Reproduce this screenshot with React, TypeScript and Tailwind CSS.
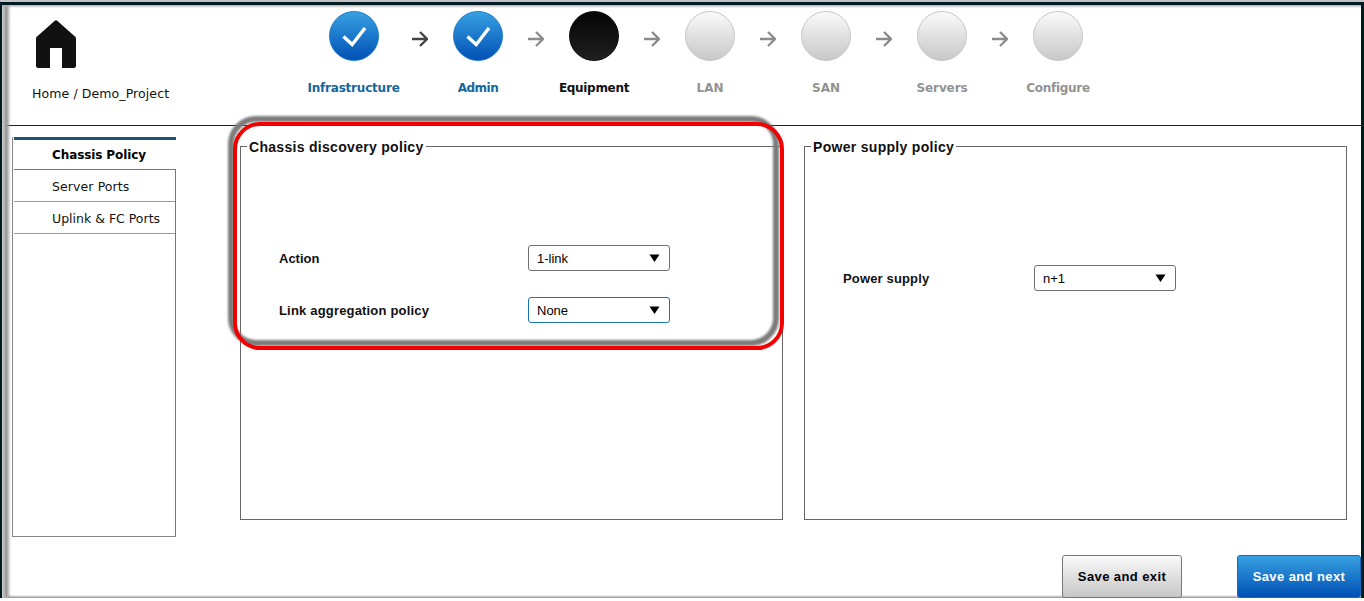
import type { ReactNode } from "react";

type StepState = "done" | "current" | "todo";

const steps: { name: string; state: StepState; tracking: string }[] = [
  { name: "Infrastructure", state: "done", tracking: "tracking-[-0.2px] -ml-px" },
  { name: "Admin", state: "done", tracking: "tracking-[-0.5px]" },
  { name: "Equipment", state: "current", tracking: "tracking-[-0.3px]" },
  { name: "LAN", state: "todo", tracking: "" },
  { name: "SAN", state: "todo", tracking: "" },
  { name: "Servers", state: "todo", tracking: "tracking-[-0.1px]" },
  { name: "Configure", state: "todo", tracking: "tracking-[-0.3px]" },
];

const circleStyle: Record<StepState, string> = {
  done: "border-[#1b7cc9] bg-linear-to-b from-[#38a0e2] to-[#0450b4]",
  current: "border-[#0c0c0c] bg-linear-to-b from-[#060606] to-[#202020]",
  todo: "border-[#c6c6c6] bg-linear-to-b from-[#fafafa] to-[#c8c8c8]",
};

const labelStyle: Record<StepState, string> = {
  done: "text-[#15669c]",
  current: "text-[#111]",
  todo: "text-[#929292]",
};

function Arrow({ dark }: { dark: boolean }) {
  return (
    <svg
      width="16"
      height="16"
      viewBox="0 0 16 16"
      fill="none"
      strokeWidth="2.3"
      className={dark ? "stroke-[#444]" : "stroke-[#8b8b8b]"}
    >
      <path d="M0 8H14.5M8 1L15 8L8 15" />
    </svg>
  );
}

function Step({ name, state, tracking }: { name: string; state: StepState; tracking: string }) {
  return (
    <div className="flex w-[50px] flex-col items-center">
      <div className={`flex size-[50px] shrink-0 items-center justify-center rounded-full border ${circleStyle[state]}`}>
        {state === "done" && (
          <svg width="26" height="22" viewBox="0 0 26 22" fill="none" stroke="white" strokeWidth="3.4" className="mt-[2px]">
            <path d="M2.500 10.500L11.200 18.500L24 2" />
          </svg>
        )}
      </div>
      <span
        className={`mt-[19px] text-[12px] leading-[17px] font-bold whitespace-nowrap ${labelStyle[state]} ${tracking}`}
      >
        {name}
      </span>
    </div>
  );
}

function Select({ value, focused = false }: { value: string; focused?: boolean }) {
  return (
    <button
      className={`flex h-[26px] w-[142px] items-center justify-between rounded-[3px] border bg-white pr-[9px] pl-2 font-['Liberation_Sans',sans-serif] text-[13px] text-black ${
        focused ? "border-[#1c72b5]" : "border-[#707070]"
      }`}
    >
      <span className="pt-[2px]">{value}</span>
      <svg width="11" height="8" viewBox="0 0 11 8">
        <path d="M0.500 0.500H10.500L5.500 8Z" fill="#000" />
      </svg>
    </button>
  );
}

function Policy({ title, children }: { title: string; children: ReactNode }) {
  return (
    <fieldset className="h-[381px] w-[543px] border border-[#666]">
      <legend className="ml-[6px] px-[2px] pt-[2px] text-[14px] leading-[13px] font-bold tracking-[0.300px] text-[#111]">
        {title}
      </legend>
      {children}
    </fieldset>
  );
}

export default function App() {
  return (
    <div className="h-[601px] w-[1364px] overflow-hidden bg-white font-['DejaVu_Sans',sans-serif] text-[#111]">
      <div className="relative flex h-[598px] flex-col">
        <div className="h-[2px] shrink-0 bg-[#c4c2c9]" />
        <div className="flex min-h-0 flex-1 flex-col border-t-[3px] border-r-[3px] border-l-2 border-[#001a22]">
          <div className="flex min-h-0 flex-1 flex-col bg-white">
            <header className="flex h-[121px] shrink-0 border-b border-[#222]">
              <div className="w-[327px] shrink-0 pt-[15px] pl-[30px]">
                <svg width="44" height="48" viewBox="0 0 44 48" className="ml-[3px]">
                  <path
                    d="M19.5 1Q21 -.5 22.500 1L40.500 17Q41 17.500 41 19V45.500Q41 48 38.500 48H27V28H15V48H3.500Q1 48 1 45.500V19Q1 17.500 1.500 17Z"
                    fill="#111"
                  />
                </svg>
                <p className="mt-[17px] text-[12.500px] leading-[17px] tracking-[0.100px]">Home / Demo_Project</p>
              </div>
              <div className="flex pt-[6px]">
                {steps.map((step, i) => (
                  <div key={step.name} className="flex">
                    {i > 0 && (
                      <div
                        className={`flex h-[56px] items-center justify-center ${
                          i === 1 ? "w-[74px] pl-[8px]" : "w-[66px]"
                        }`}
                      >
                        <Arrow dark={i === 1} />
                      </div>
                    )}
                    <Step name={step.name} state={step.state} tracking={step.tracking} />
                  </div>
                ))}
              </div>
            </header>

            <div className="flex pt-[11px] pl-[10px]">
              <nav className="h-[400px] w-[164px] shrink-0 border-b border-l border-[#858585] pl-px">
                <div className="h-[33px] border-t-[3px] border-b border-t-[#1b5378] border-b-[#777] pt-[6px] pl-[38px] text-[12px] leading-[18px] font-bold tracking-[-0.100px] text-black">
                  Chassis Policy
                </div>
                <div className="h-[366px] border-r border-[#777]">
                  <div className="h-8 border-b border-[#999] pt-[8px] pl-[38px] text-[12.500px] leading-[18px] tracking-[0.100px]">
                    Server Ports
                  </div>
                  <div className="h-8 border-b border-[#999] pt-[8px] pl-[38px] text-[12.500px] leading-[18px]">
                    Uplink &amp; FC Ports
                  </div>
                </div>
              </nav>

              <main className="ml-16 pt-[2px] font-['Liberation_Sans',sans-serif]">
                <div className="flex gap-[21px]">
                  <Policy title="Chassis discovery policy">
                    <div className="flex flex-col gap-[26px] pt-[91px] pl-[38px]">
                      <div className="flex items-center">
                        <span className="w-[249px] pt-[2px] text-[13px] font-bold">Action</span>
                        <Select value="1-link" />
                      </div>
                      <div className="flex items-center">
                        <span className="w-[249px] pt-[2px] text-[13px] font-bold tracking-[0.180px]">
                          Link aggregation policy
                        </span>
                        <Select value="None" focused />
                      </div>
                    </div>
                  </Policy>
                  <Policy title="Power supply policy">
                    <div className="flex items-center pt-[111px] pl-[38px]">
                      <span className="w-[191px] pt-[2px] text-[13px] font-bold tracking-[0.150px]">Power supply</span>
                      <Select value="n+1" />
                    </div>
                  </Policy>
                </div>
                <div className="-mr-[14px] flex justify-end gap-[55px] pt-[35px] text-[13px] font-bold tracking-[0.400px]">
                  <button className="relative z-10 h-[43px] w-[120px] rounded-[3px] border border-[#777] bg-linear-to-b from-[#fafafa] to-[#c6c6c6] text-black">
                    Save and exit
                  </button>
                  <button className="relative z-10 h-[43px] w-[124px] rounded-[3px] border border-[#126cb9] bg-linear-to-b from-[#38a0e2] to-[#0450b4] text-white">
                    Save and next
                  </button>
                </div>
              </main>
            </div>
          </div>
        </div>
        <div className="pointer-events-none absolute top-[5px] bottom-0 left-[2px] w-[9px] bg-linear-to-r from-[#d0d0d0] via-[#999] to-transparent" />
        <div className="pointer-events-none absolute top-[5px] right-[3px] left-[2px] h-[3px] bg-linear-to-b from-[#b0b0b0] to-transparent" />
        <div className="pointer-events-none absolute right-[3px] bottom-0 left-[8px] h-[3px] bg-linear-to-b from-transparent to-[#909090]" />
        <div className="pointer-events-none absolute top-[116px] left-[228px] h-[230px] w-[551px] rounded-[28px] border-[6px] border-[#7b7b7b] blur-[1px]" />
        <div className="pointer-events-none absolute top-[122px] left-[233px] h-[228px] w-[551px] rounded-[27px] border-[4.500px] border-[#f20000]" />
      </div>
    </div>
  );
}
